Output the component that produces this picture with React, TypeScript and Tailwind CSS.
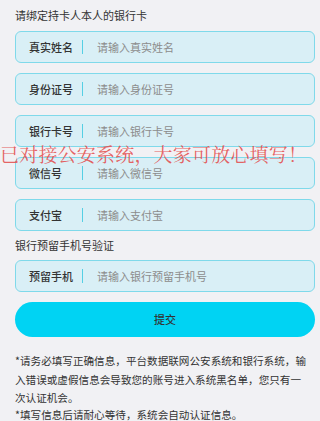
import React from 'react';

const fields = [
  { label: '真实姓名', placeholder: '请输入真实姓名' },
  { label: '身份证号', placeholder: '请输入身份证号' },
  { label: '银行卡号', placeholder: '请输入银行卡号' },
  { label: '微信号', placeholder: '请输入微信号' },
  { label: '支付宝', placeholder: '请输入支付宝' },
];

const Field: React.FC<{ label: string; placeholder: string }> = ({ label, placeholder }) => (
  <div className="flex items-center h-[32px] rounded-[6px] border border-[#7fd9ea] bg-[#d9eff6] pl-[13px]">
    <span className="w-[53px] text-[11px] font-medium text-[#333]">{label}</span>
    <span className="w-px h-[14px] bg-[#55cfe4]"></span>
    <input
      className="ml-[14px] flex-1 min-w-0 bg-transparent outline-none text-[11px] text-[#333] placeholder:text-[#8c8c8c]"
      placeholder={placeholder}
    />
  </div>
);

const App: React.FC = () => {
  return (
    <div
      className="relative h-[421px] overflow-hidden bg-[#f1f1f4] pl-[15px] pr-[5px] pt-[7px]"
      style={{ fontFamily: '"Noto Sans CJK SC", "Noto Sans", sans-serif' }}
    >
      <p className="text-[11px] leading-[16px] text-[#333] mb-[8px]">请绑定持卡人本人的银行卡</p>

      <div className="flex flex-col gap-[10px]">
        {fields.map((f) => (
          <Field key={f.label} label={f.label} placeholder={f.placeholder} />
        ))}
      </div>

      <p className="text-[11px] leading-[16px] text-[#333] mt-[6px] mb-[7px]">银行预留手机号验证</p>
      <Field label="预留手机" placeholder="请输入银行预留手机号" />

      <button className="mt-[10px] w-full h-[35px] rounded-full bg-[#00d3f3] text-[11px] font-medium text-[#333]">
        提交
      </button>

      <div className="mt-[15px] text-[10.6px] leading-[18.5px] text-[#333]">
        <p>
          *请务必填写正确信息，平台数据联网公安系统和银行系统，输<br />
          入错误或虚假信息会导致您的账号进入系统黑名单，您只有一<br />
          次认证机会。
        </p>
        <p className="-mt-[2px]">*填写信息后请耐心等待，系统会自动认证信息。</p>
      </div>

      {/* warning overlay */}
      <div
        className="absolute left-0 top-[141px] text-[19px] leading-[26px] tracking-[0.2px] text-[#e35050]/90 whitespace-nowrap pointer-events-none"
        style={{ fontFamily: '"Noto Serif CJK SC", "Noto Sans CJK SC", serif' }}
      >
        已对接公安系统，大家可放心填写！
      </div>
    </div>
  );
};

export default App;
